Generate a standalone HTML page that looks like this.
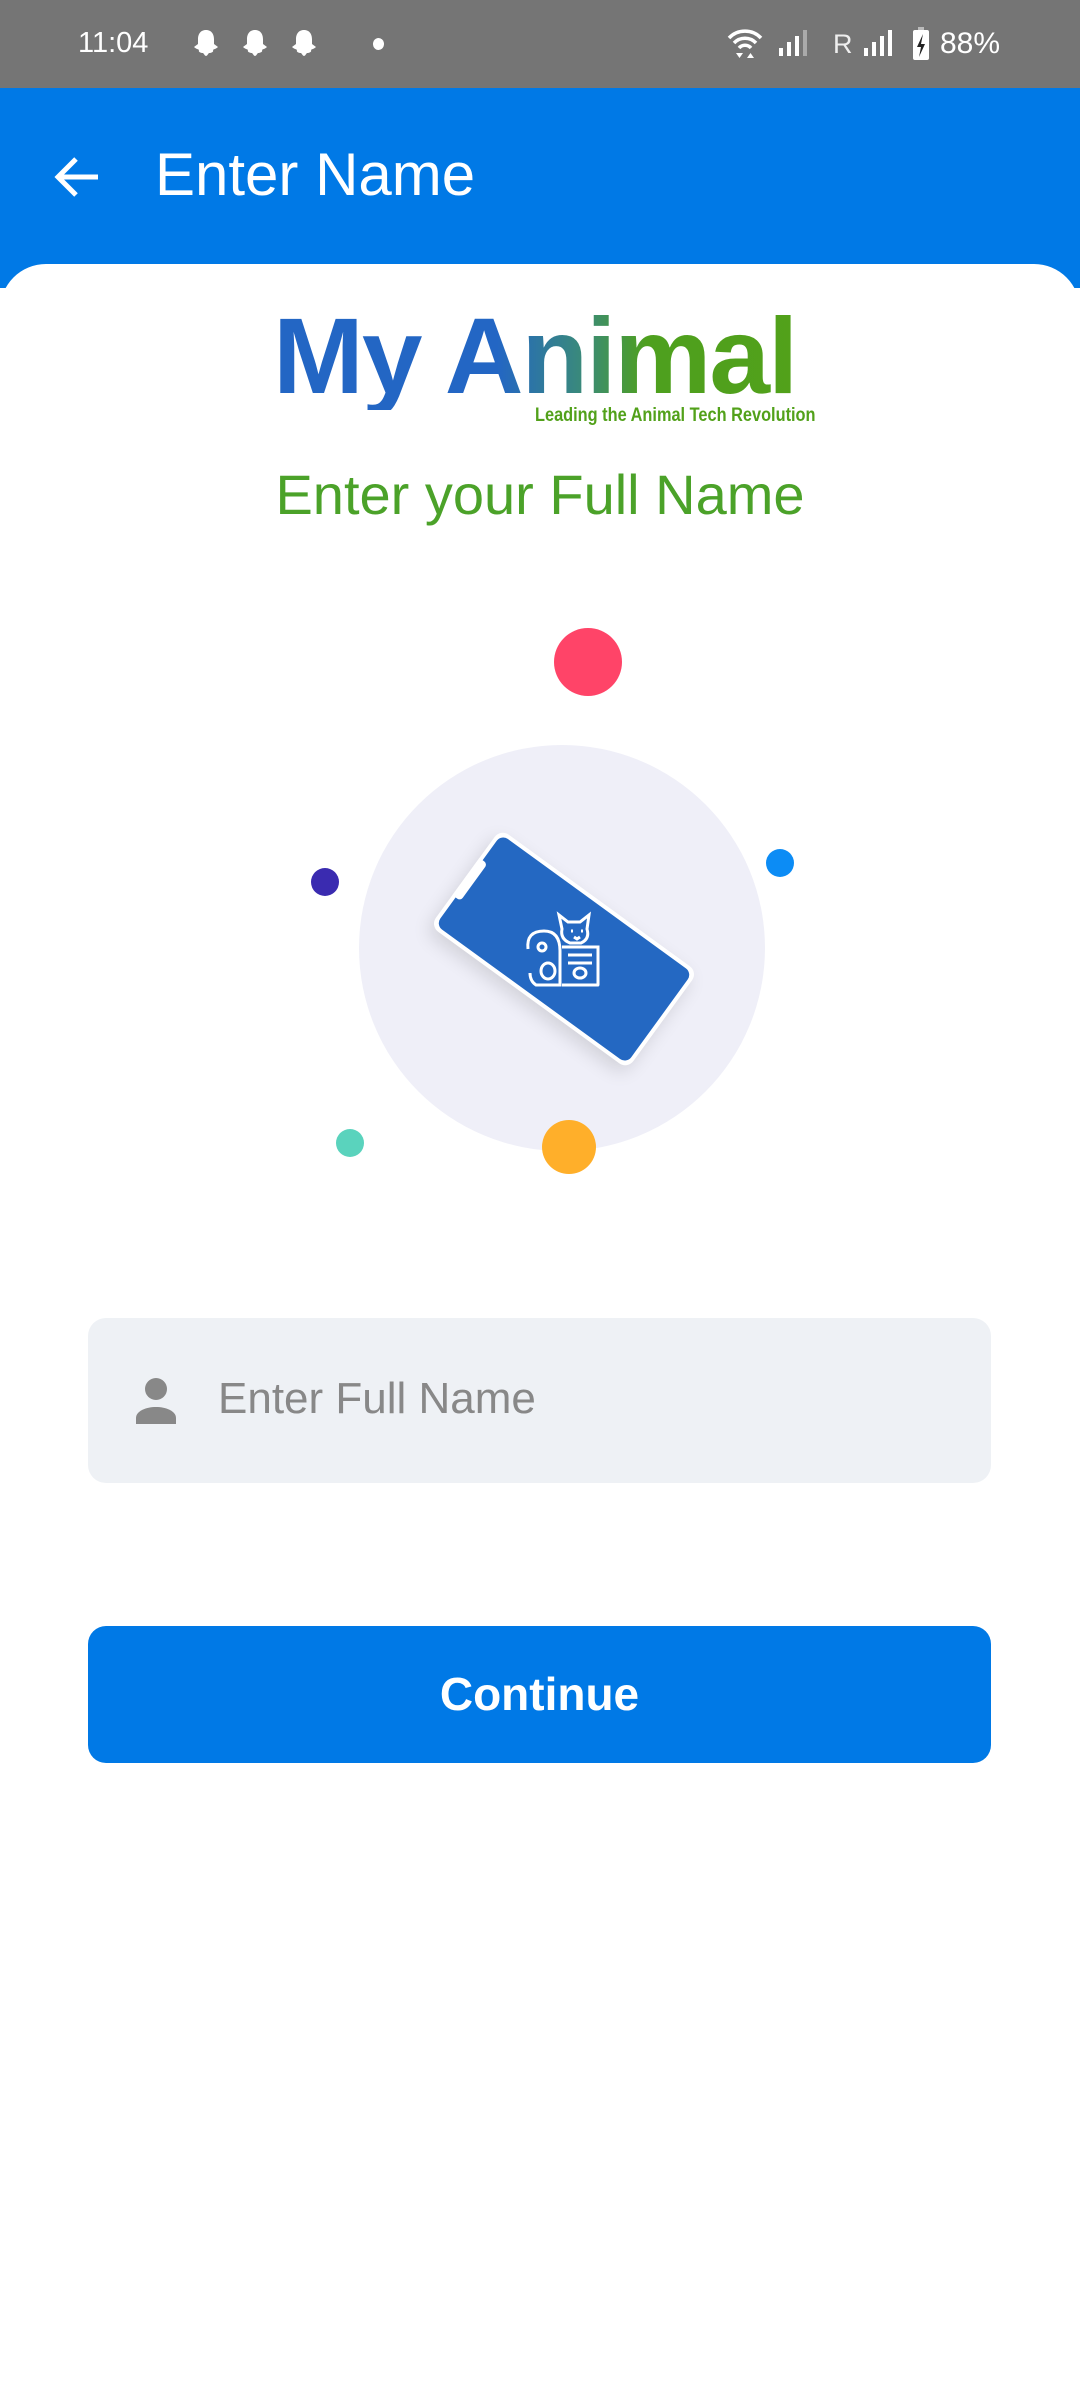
<!DOCTYPE html>
<html><head><meta charset="utf-8"><style>
*{margin:0;padding:0;box-sizing:border-box}
body{width:1080px;height:2408px;background:#fff;font-family:"Liberation Sans",sans-serif;position:relative;overflow:hidden}
.sb{position:absolute;left:0;top:0;width:1080px;height:88px;background:#757575;color:#fff}
.ab{position:absolute;left:0;top:88px;width:1080px;height:200px;background:#0079E6}
.card{position:absolute;left:0;top:264px;width:1080px;height:2144px;background:#fff;border-radius:46px 46px 0 0}
.abs{position:absolute}
.dot{position:absolute;border-radius:50%}
</style></head><body>
<div class="sb">
  <div class="abs" style="left:78px;top:27px;font-size:29px;">11:04</div>
  <svg class="abs" style="left:190px;top:28px" width="140" height="32" viewBox="0 0 140 32">
    <g fill="#fff">
      <path d="M16 2c-6 0-8 5-8 9v5l-4 3c2 2 4 2 5 3-1 2 2 3 4 3 1 1 2 3 3 3s2-2 3-3c2 0 5-1 4-3 1-1 3-1 5-3l-4-3v-5c0-4-2-9-8-9z"/>
      <path transform="translate(49 0)" d="M16 2c-6 0-8 5-8 9v5l-4 3c2 2 4 2 5 3-1 2 2 3 4 3 1 1 2 3 3 3s2-2 3-3c2 0 5-1 4-3 1-1 3-1 5-3l-4-3v-5c0-4-2-9-8-9z"/>
      <path transform="translate(98 0)" d="M16 2c-6 0-8 5-8 9v5l-4 3c2 2 4 2 5 3-1 2 2 3 4 3 1 1 2 3 3 3s2-2 3-3c2 0 5-1 4-3 1-1 3-1 5-3l-4-3v-5c0-4-2-9-8-9z"/>
    </g>
  </svg>
  <div class="dot" style="left:373px;top:38px;width:11px;height:12px;background:#fff"></div>
  <svg class="abs" style="left:725px;top:28px" width="40" height="32" viewBox="0 0 40 32">
    <path d="M4 10a22 22 0 0 1 32 0M9 15a15 15 0 0 1 22 0M14 20a8 8 0 0 1 12 0" stroke="#fff" stroke-width="3.5" fill="none"/>
    <path d="M11 25h7l-3.5 5z M22 30h7l-3.5-5z" fill="#fff"/>
  </svg>
  <svg class="abs" style="left:777px;top:28px" width="32" height="30"><rect x="2" y="20" width="4" height="8" fill="#fff"/><rect x="10" y="14" width="4" height="14" fill="#fff"/><rect x="18" y="8" width="4" height="20" fill="#fff"/><rect x="26" y="2" width="4" height="26" fill="#aaa"/></svg>
  <div class="abs" style="left:833px;top:29px;font-size:27px;color:#eee">R</div>
  <svg class="abs" style="left:862px;top:28px" width="32" height="30"><rect x="2" y="20" width="4" height="8" fill="#fff"/><rect x="10" y="14" width="4" height="14" fill="#fff"/><rect x="18" y="8" width="4" height="20" fill="#fff"/><rect x="26" y="2" width="4" height="26" fill="#fff"/></svg>
  <svg class="abs" style="left:912px;top:27px" width="18" height="34"><rect x="6" y="0" width="6" height="4" fill="#bbb"/><rect x="1" y="3" width="16" height="30" rx="2" fill="#fff"/><path d="M11 7l-6 13h4l-2 10 6-13h-4z" fill="#222"/></svg>
  <div class="abs" style="left:940px;top:27px;font-size:30px">88%</div>
</div>
<div class="ab">
  <svg class="abs" style="left:52px;top:66px" width="50" height="46" viewBox="0 0 50 46"><path d="M46 23H6M24 5L6 23l18 18" stroke="#fff" stroke-width="5" fill="none"/></svg>
  <div class="abs" style="left:155px;top:52px;font-size:60px;color:#fff">Enter Name</div>
</div>
<div class="card">
  <div class="abs" style="left:273px;top:38px;display:inline-block;padding-right:10px;font-size:108px;font-weight:bold;line-height:1;white-space:nowrap;transform:scaleX(1.01);transform-origin:left top;background:linear-gradient(90deg,#2366C4 0%,#2366C4 42%,#3a8a7a 58%,#4ea01e 70%,#52A11A 100%);-webkit-background-clip:text;background-clip:text;color:transparent;letter-spacing:-2px">My Animal</div>
  <div class="abs" style="left:535px;top:141px;font-size:19px;font-weight:bold;color:#52A11A;white-space:nowrap;transform:scaleX(0.86);transform-origin:left top">Leading the Animal Tech Revolution</div>
  <div class="abs" style="left:0;width:1080px;text-align:center;top:198px;font-size:56px;color:#4BA229">Enter your Full Name</div>

  <div class="dot" style="left:359px;top:481px;width:406px;height:406px;background:#EFEFF8"></div>
  <div class="dot" style="left:554px;top:364px;width:68px;height:68px;background:#FF4468"></div>
  <div class="dot" style="left:766px;top:585px;width:28px;height:28px;background:#0C8CF5"></div>
  <div class="dot" style="left:311px;top:604px;width:28px;height:28px;background:#3A2BB0"></div>
  <div class="dot" style="left:336px;top:865px;width:28px;height:28px;background:#5AD3BD"></div>
  <div class="dot" style="left:542px;top:856px;width:54px;height:54px;background:#FFAF2A"></div>

  <div class="abs" style="left:442px;top:625px;width:244px;height:120px;transform:rotate(36deg);background:#fff;border-radius:10px;box-shadow:0 8px 18px rgba(0,0,0,0.12);">
    <div class="abs" style="left:4px;top:4px;right:4px;bottom:4px;background:#2468C2;border-radius:8px"></div>
    <div class="abs" style="left:0;top:36px;width:10px;height:46px;background:#fff;border-radius:0 4px 4px 0"></div>
    <svg class="abs" style="left:72px;top:10px" width="100" height="100" viewBox="0 0 100 100">
      <g stroke="#fff" stroke-width="3" fill="none" transform="rotate(-36 50 50)">
        <path d="M14 50q-2-18 16-18q16 0 16 20v34H22q-6-4-6-12"/>
        <circle cx="28" cy="48" r="4"/>
        <ellipse cx="34" cy="72" rx="7" ry="8"/>
        <path d="M48 30l-3-14 9 7h12l9-7-2 14q3 10-6 14H56q-10-4-8-14z"/>
        <path d="M57 32h2M67 32h2M60 38l3 2 3-2"/>
        <path d="M48 48h36v38H48M54 56h24M54 64h24"/>
        <ellipse cx="66" cy="74" rx="6" ry="5"/>
      </g>
    </svg>
  </div>

  <div class="abs" style="left:88px;top:1054px;width:903px;height:165px;background:#EEF1F5;border-radius:18px">
    <svg class="abs" style="left:48px;top:60px" width="40" height="46" viewBox="0 0 40 46"><circle cx="20" cy="11" r="11" fill="#888"/><path d="M0 46v-6c0-7 10-11 20-11s20 4 20 11v6z" fill="#888"/></svg>
    <div class="abs" style="left:130px;top:56px;font-size:44px;color:#888">Enter Full Name</div>
  </div>
  <div class="abs" style="left:88px;top:1362px;width:903px;height:137px;background:#0079E6;border-radius:18px;color:#fff;font-weight:bold;font-size:46px;text-align:center;line-height:137px">Continue</div>
</div>
</body></html>
